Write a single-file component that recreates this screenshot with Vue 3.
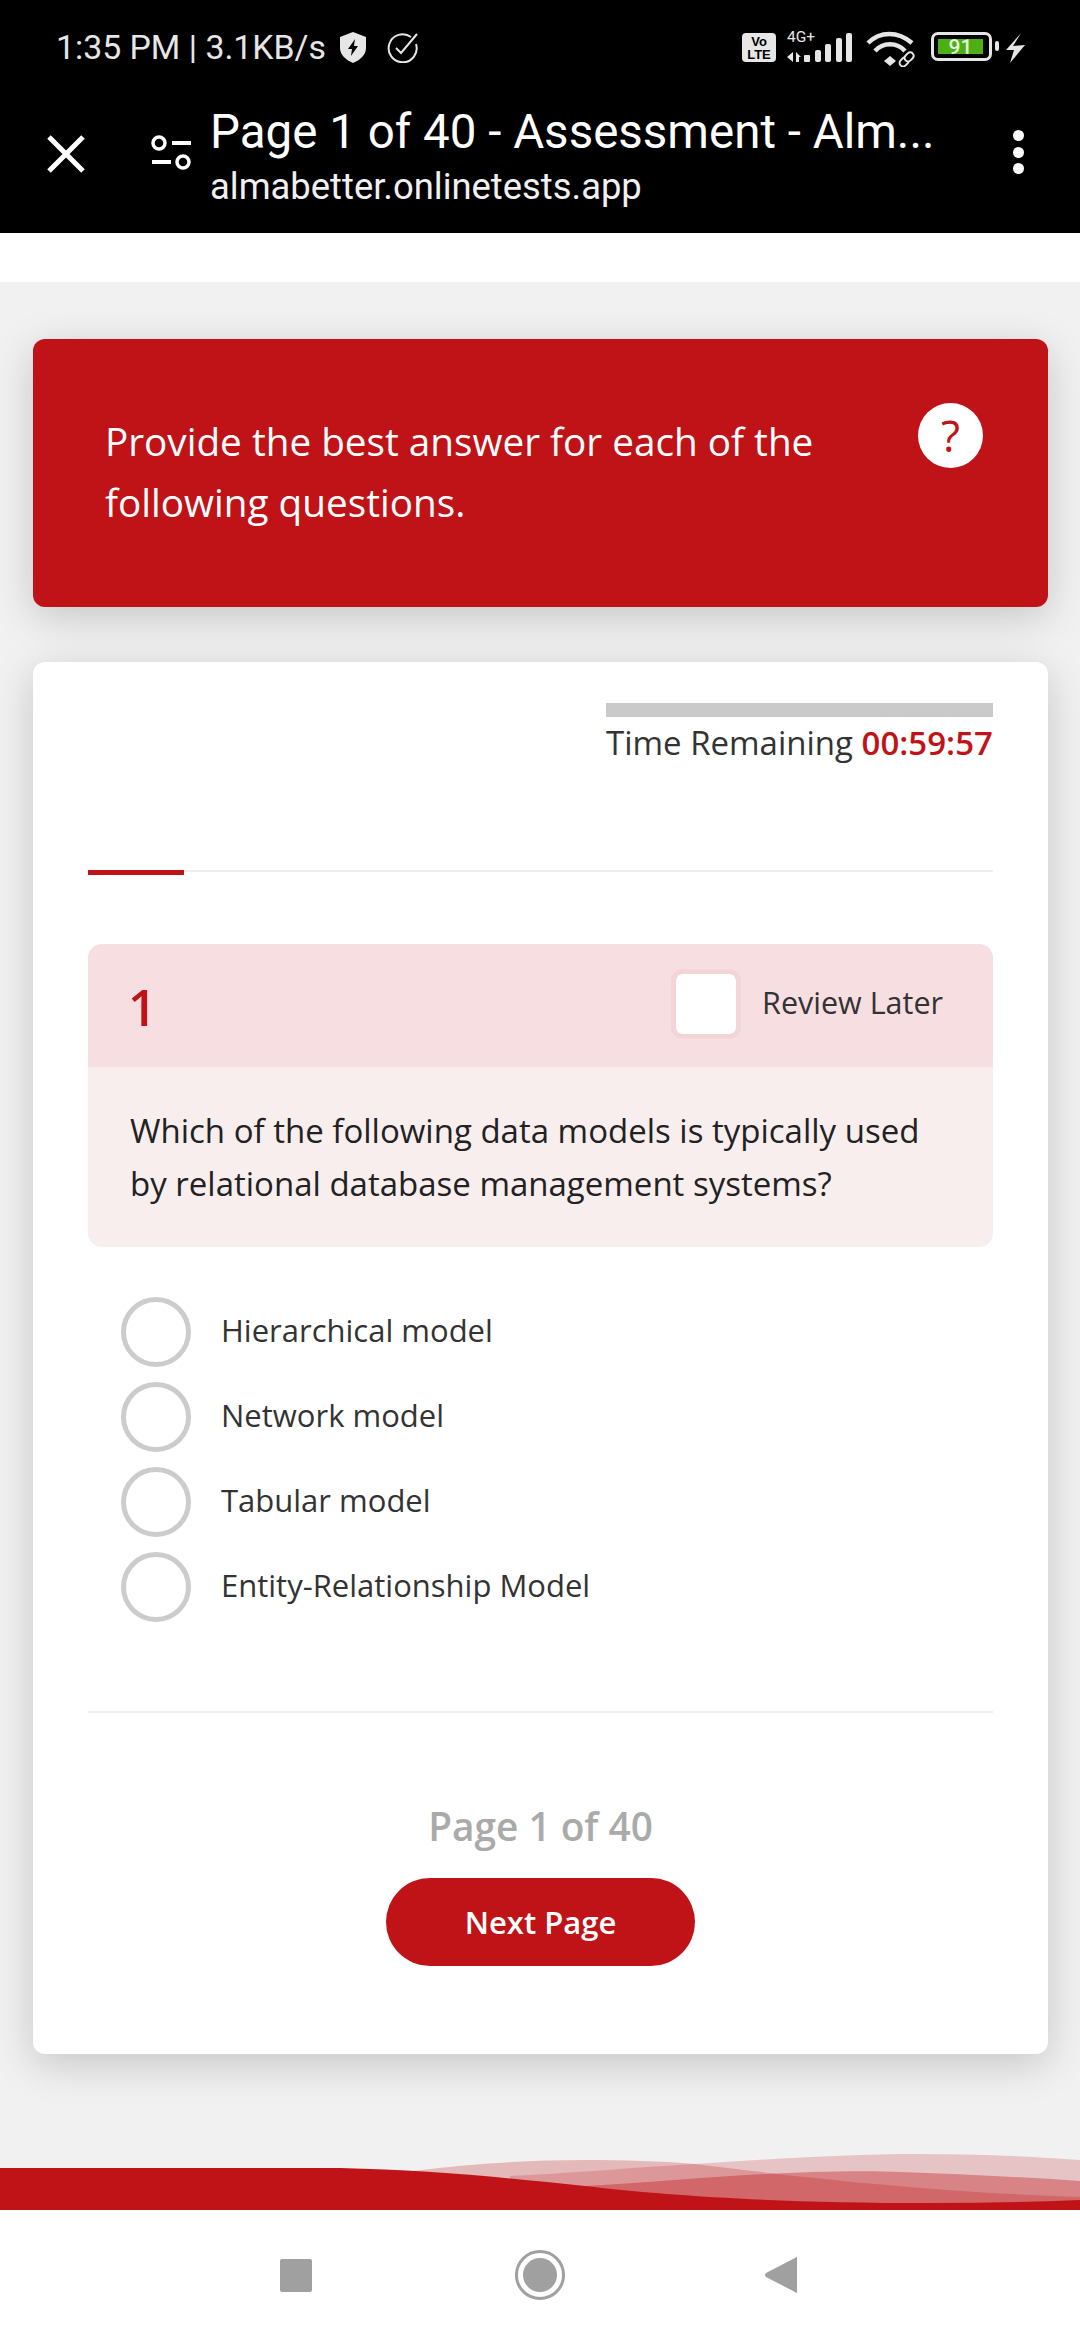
<template>
  <div class="screen">
    <div class="top">
      <div class="status">
        <div class="status-left">
          <span class="clock">1:35 PM | 3.1KB/s</span>
          <svg class="shield" width="28" height="31" viewBox="0 0 28 31">
            <path d="M14 0 L27 5 V16 C27 23 21 28 14 31 C7 28 1 23 1 16 V5 Z" fill="#e6e6e6" />
            <path d="M16 7 L9 17 H13 L12 24 L19 14 H15 Z" fill="#000" />
          </svg>
          <svg class="check" width="31" height="31" viewBox="0 0 31 31">
            <path d="M24 5 A14 14 0 1 0 29 12" fill="none" stroke="#e6e6e6" stroke-width="2" />
            <path d="M9 16 L14 21 L30 2" fill="none" stroke="#e6e6e6" stroke-width="2" />
          </svg>
        </div>
        <div class="status-right">
          <svg class="volte-icon" width="34" height="30" viewBox="0 0 34 30">
            <rect width="34" height="29" rx="4" fill="#e6e6e6" />
            <text x="17" y="13" text-anchor="middle" class="volte">Vo</text>
            <text x="17" y="26" text-anchor="middle" class="volte">LTE</text>
          </svg>
          <svg class="signal" width="66" height="38" viewBox="0 -4 66 38">
            <text x="1" y="12" class="net">4G+</text>
            <path d="M7 22 V32 L1 27 Z M10 22 L15 27 H10 Z M10 27 H13 V32 H10 Z" fill="#e6e6e6" />
            <rect x="18" y="25" width="6" height="7" rx="1" fill="#e6e6e6" />
            <rect x="29" y="20" width="6" height="12" rx="2" fill="#e6e6e6" />
            <rect x="39" y="14" width="6" height="18" rx="2" fill="#e6e6e6" />
            <rect x="50" y="8" width="6" height="24" rx="2" fill="#e6e6e6" />
            <rect x="60" y="3" width="6" height="29" rx="2" fill="#e6e6e6" />
          </svg>
          <svg class="wifi" width="50" height="36" viewBox="0 0 50 36">
            <path d="M2 12 C14 0 32 0 46 12" fill="none" stroke="#e6e6e6" stroke-width="4.5" />
            <path d="M9 20 C17 11 31 11 39 20" fill="none" stroke="#e6e6e6" stroke-width="4.5" />
            <path d="M18 30 L24 25 L30 30 L24 35 Z" fill="#e6e6e6" />
            <g transform="rotate(-45 41 28)" fill="#000" stroke="#e6e6e6" stroke-width="2">
              <rect x="32" y="24.5" width="10" height="7" rx="3.5" />
              <rect x="39" y="24.5" width="10" height="7" rx="3.5" />
            </g>
          </svg>
          <div class="battery">
            <span class="battery-fill">91</span>
          </div>
          <span class="battery-nub"></span>
          <svg class="bolt" width="19" height="30" viewBox="0 0 19 30">
            <path d="M15 0 L7 13 L19 12 L4 30 L8 17 L0 17 Z" fill="#e6e6e6" />
          </svg>
        </div>
      </div>
      <div class="appbar">
        <svg class="close" width="38" height="38" viewBox="0 0 38 38">
          <path d="M2 2 L36 36 M36 2 L2 36" stroke="#fff" stroke-width="5" />
        </svg>
        <svg class="tune" width="41" height="36" viewBox="0 0 41 36">
          <circle cx="8" cy="8" r="6" fill="none" stroke="#fff" stroke-width="3.5" />
          <rect x="21" y="6" width="19" height="4" fill="#fff" />
          <circle cx="32" cy="27" r="6" fill="none" stroke="#fff" stroke-width="3.5" />
          <rect x="1" y="25" width="19" height="4" fill="#fff" />
        </svg>
        <div class="titles">
          <div class="title">Page 1 of 40 - Assessment - Alm...</div>
          <div class="url">almabetter.onlinetests.app</div>
        </div>
        <div class="dots">
          <span></span>
          <span></span>
          <span></span>
        </div>
      </div>
    </div>

    <div class="strip"></div>

    <div class="main">
      <div class="banner">
        <p class="banner-text">Provide the best answer for each of the following questions.</p>
        <div class="help">?</div>
      </div>

      <div class="card">
        <div class="timer">
          <div class="timer-bar"></div>
          <div class="timer-text">Time Remaining <b>00:59:57</b></div>
        </div>
        <div class="progress">
          <div class="progress-value" :style="{ width: progress + 'px' }"></div>
        </div>

        <div class="question">
          <div class="question-head">
            <span class="question-num">1</span>
            <label class="review">
              <span class="review-box"></span>
              <span class="review-text">Review Later</span>
            </label>
          </div>
          <div class="question-body">
            Which of the following data models is typically used by relational database management systems?
          </div>
        </div>

        <div class="options">
          <div v-for="opt in options" :key="opt" class="option">
            <span class="radio"></span>
            <span class="option-text">{{ opt }}</span>
          </div>
        </div>

        <div class="card-foot">
          <div class="page-count">Page 1 of 40</div>
          <button class="next">Next Page</button>
        </div>
      </div>
    </div>

    <svg class="wave" width="1080" height="60" viewBox="0 0 1080 60">
      <path d="M413 21 C470 14 530 10 585 10 C625 10 660 11 695 14 C790 26 930 42 1080 47 V60 H413 Z" fill="rgba(192,19,24,.25)" />
      <path d="M510 26 C590 22 640 17 695 14 C770 9 850 4 916 4 C970 4 1030 6 1080 10 V60 H510 Z" fill="rgba(192,19,24,.2)" />
      <path d="M585 36 C660 32 740 24 813 22 C850 21 880 21 900 22 C960 24 1020 27 1080 31 V60 H585 Z" fill="rgba(192,19,24,.37)" />
      <path d="M0 18 H340 C430 20 510 28 585 36 C670 46 780 53 930 53 C980 53 1030 52 1080 50 V60 H0 Z" fill="#bf1318" />
    </svg>

    <div class="nav">
      <svg width="32" height="33" viewBox="0 0 32 33">
        <rect width="32" height="33" rx="2" fill="#a0a0a0" />
      </svg>
      <svg class="home" width="50" height="50" viewBox="0 0 50 50">
        <circle cx="25" cy="25" r="23.5" fill="none" stroke="#a0a0a0" stroke-width="3" />
        <circle cx="25" cy="25" r="17" fill="#a0a0a0" />
      </svg>
      <svg width="32" height="38" viewBox="0 0 32 38">
        <path d="M32 2 V36 Q32 38 30 36 L1 21 Q-1 19 1 17 L30 2 Q32 0 32 2 Z" fill="#a0a0a0" />
      </svg>
    </div>
  </div>
</template>

<script setup>
const progress = 96

const options = [
  'Hierarchical model',
  'Network model',
  'Tabular model',
  'Entity-Relationship Model'
]
</script>

<style>
html,
body {
  margin: 0;
  background: #fff;
}
</style>

<style scoped>
.screen {
  width: 1080px;
  height: 2340px;
  display: flex;
  flex-direction: column;
  overflow: hidden;
  font-family: "Open Sans", sans-serif;
  color: #333;
}

.top {
  height: 233px;
  background: #000;
  flex-shrink: 0;
  font-family: Roboto, sans-serif;
}

.status {
  height: 94px;
  box-sizing: border-box;
  padding: 30px 55px 0 56px;
  display: flex;
  justify-content: space-between;
}

.status-left {
  display: flex;
  align-items: flex-start;
}

.clock {
  color: #e6e6e6;
  font-size: 33.8px;
  line-height: 36px;
  margin-right: 13px;
}

.shield {
  margin: 2px 20px 0 0;
}

.check {
  margin-top: 2px;
}

.status-right {
  display: flex;
  align-items: flex-start;
}

.volte-icon {
  margin-top: 3px;
}

.volte {
  font: 700 13px "Liberation Sans", sans-serif;
  fill: #000;
}

.net {
  font: 400 15.5px Roboto, sans-serif;
  fill: #e6e6e6;
}

.signal {
  margin: -4px 0 0 10px;
}

.wifi {
  margin: 1px 0 0 14px;
}

.battery {
  margin: 2px 0 0 15px;
  width: 61px;
  height: 29px;
  box-sizing: border-box;
  border: 3px solid #e6e6e6;
  border-radius: 7px;
  padding: 4px 4px;
}

.battery-fill {
  display: block;
  width: 45px;
  height: 15px;
  background: #4caf14;
  color: #e8f5dc;
  font-size: 21px;
  font-weight: 500;
  line-height: 16px;
  text-align: center;
}

.battery-nub {
  width: 4px;
  height: 10px;
  margin: 11px 0 0 3px;
  background: #e6e6e6;
  border-radius: 2px;
}

.bolt {
  margin: 3px 0 0 7px;
}

.appbar {
  display: flex;
  align-items: flex-start;
  padding: 0 56px 0 47px;
}

.close {
  margin-top: 41px;
}

.tune {
  margin: 41px 0 0 66px;
}

.titles {
  flex: 1;
  margin: 10px 0 0 18px;
}

.title {
  color: #fff;
  font-size: 47.5px;
  line-height: 56px;
  white-space: nowrap;
}

.url {
  color: #f0f0f0;
  font-size: 36.4px;
  line-height: 44px;
  margin-top: 5px;
}

.dots {
  display: flex;
  flex-direction: column;
  gap: 5.5px;
  margin-top: 36px;
}

.dots span {
  width: 11px;
  height: 11px;
  background: #fff;
  border-radius: 50%;
}

.strip {
  height: 49px;
  background: #fff;
  flex-shrink: 0;
}

.main {
  flex: 1;
  background: #f1f1f1;
  padding: 57px 32px 0 33px;
  display: flex;
  flex-direction: column;
  gap: 55px;
}

.banner {
  height: 268px;
  box-sizing: border-box;
  background: #bf1318;
  border-radius: 12px;
  box-shadow: 0 10px 40px rgba(0, 0, 0, 0.18);
  padding: 64px 65px 0 72px;
  display: flex;
  justify-content: space-between;
  align-items: flex-start;
}

.banner-text {
  margin: 8px 0 0;
  width: 760px;
  color: #fff;
  font-size: 38.7px;
  line-height: 61px;
}

.help {
  width: 65px;
  height: 65px;
  border-radius: 50%;
  background: #fff;
  color: #bf1318;
  font-size: 44px;
  line-height: 65px;
  text-align: center;
}

.card {
  height: 1392px;
  box-sizing: border-box;
  background: #fff;
  border-radius: 12px;
  box-shadow: 0 10px 40px rgba(0, 0, 0, 0.18);
  padding: 41px 55px 0;
}

.timer {
  width: 387px;
  margin-left: auto;
}

.timer-bar {
  height: 14px;
  background: #cacaca;
}

.timer-text {
  font-size: 33px;
  line-height: 44px;
  margin-top: 4px;
  white-space: nowrap;
}

.timer-text b {
  color: #bf1318;
  font-weight: 600;
}

.progress {
  height: 2px;
  background: #eee;
  margin-top: 105px;
}

.progress-value {
  height: 5px;
  background: #bf1318;
}

.question {
  margin-top: 72px;
  border-radius: 14px;
  overflow: hidden;
}

.question-head {
  height: 123px;
  box-sizing: border-box;
  background: #f6dee1;
  padding: 25px 50px 0 40px;
  display: flex;
  justify-content: space-between;
  align-items: flex-start;
}

.question-num {
  color: #bf1318;
  font-size: 50px;
  font-weight: 600;
  line-height: 76px;
}

.review {
  display: flex;
  align-items: center;
  gap: 21px;
  font-size: 30.5px;
}

.review-text {
  padding-bottom: 5px;
}

.review-box {
  width: 70px;
  height: 70px;
  box-sizing: border-box;
  background: #fff;
  border: 5px solid #f3d5d8;
  border-radius: 12px;
}

.question-body {
  height: 180px;
  box-sizing: border-box;
  background: #f8eeee;
  padding: 38px 42px 0;
  color: #222;
  font-size: 33px;
  line-height: 52.5px;
}

.options {
  margin-top: 50px;
  padding-left: 33px;
  display: flex;
  flex-direction: column;
  gap: 15px;
}

.option {
  display: flex;
  align-items: center;
  gap: 30px;
  font-size: 31px;
  line-height: 44px;
}

.option-text {
  padding-bottom: 5px;
}

.radio {
  width: 70px;
  height: 70px;
  box-sizing: border-box;
  border: 5px solid #ccc;
  border-radius: 50%;
}

.card-foot {
  margin-top: 89px;
  border-top: 2px solid #eee;
  padding-top: 88px;
  display: flex;
  flex-direction: column;
  align-items: center;
}

.page-count {
  color: #aaa;
  font-size: 38.8px;
  font-weight: 600;
  line-height: 50px;
}

.next {
  margin-top: 27px;
  width: 309px;
  height: 88px;
  border: none;
  border-radius: 44px;
  background: #bf1318;
  color: #fff;
  font-family: inherit;
  font-size: 31px;
  font-weight: 600;
}

.wave {
  display: block;
  flex-shrink: 0;
  background: #f1f1f1;
}

.nav {
  height: 130px;
  flex-shrink: 0;
  background: #fff;
  box-sizing: border-box;
  padding-left: 280px;
  display: flex;
  align-items: center;
}

.home {
  margin: 0 200px 0 203px;
}
</style>
